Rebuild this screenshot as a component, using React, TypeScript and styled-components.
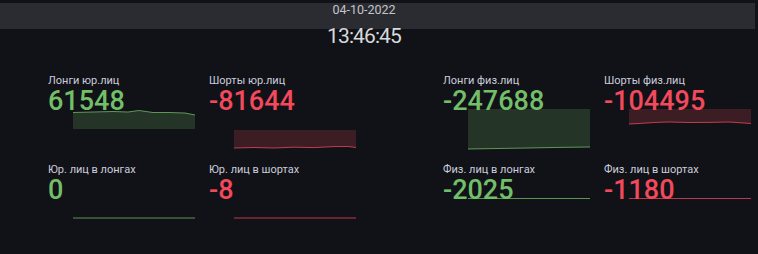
import React from "react";
import styled, { createGlobalStyle } from "styled-components";

const GlobalStyle = createGlobalStyle`
  html, body {
    margin: 0;
    padding: 0;
    background: #111217;
  }
  body {
    font-family: Roboto, "Liberation Sans", sans-serif;
  }
`;

const Page = styled.div`
  width: 758px;
  height: 254px;
  box-sizing: border-box;
  padding-top: 3px;
  background: #111217;
  overflow: hidden;
`;

const DateBar = styled.div`
  width: 755px;
  height: 26px;
  background: #2b2c31;
  box-sizing: border-box;
  padding-right: 27px;
  text-align: center;
  font-size: 12.5px;
  line-height: 14px;
  color: #c3c4c9;
`;

const Clock = styled.div`
  width: 728px;
  text-align: center;
  font-size: 21px;
  line-height: 15px;
  letter-spacing: -0.9px;
  color: #d8d9da;
`;

const Groups = styled.div`
  display: flex;
  gap: 73px;
  margin-top: 29px;
  padding-left: 48px;
`;

const Group = styled.div`
  display: grid;
  grid-template-columns: 161px 161px;
  grid-auto-rows: 89px;
`;

const Stat = styled.div`
  display: flex;
  flex-direction: column;
`;

const Label = styled.div`
  font-size: 11px;
  line-height: 15px;
  color: #ccccdc;
  white-space: nowrap;
`;

const Value = styled.div<{ $tone: "up" | "down" }>`
  position: relative;
  z-index: 1;
  font-size: 27px;
  line-height: 27px;
  font-weight: 500;
  color: ${(p) => (p.$tone === "up" ? "#73bf69" : "#f2495c")};
  white-space: nowrap;
`;

const SparkSvg = styled.svg`
  display: block;
  margin-top: -6px;
  margin-left: 25px;
  overflow: visible;
`;

const W = 122;
const H = 41;

type Pt = [number, number];

interface ISparkline {
  points: Pt[];
  fillTo?: number;
  color: string;
}

const Sparkline = ({ points, fillTo, color }: ISparkline): React.ReactElement => {
  const line = points.map(([x, y], i) => `${i ? "L" : "M"}${x} ${y}`).join(" ");
  const area = fillTo !== undefined ? `${line} L${W} ${fillTo} L0 ${fillTo} Z` : null;
  return (
    <SparkSvg width={W} height={H} viewBox={`0 0 ${W} ${H}`}>
      {area && <path d={area} fill={color} fillOpacity={0.2} />}
      <path d={line} fill="none" stroke={color} strokeWidth={1} strokeOpacity={0.75} />
    </SparkSvg>
  );
};

const GREEN = "#73bf69";
const RED = "#f2495c";

interface IStatData {
  label: string;
  value: string;
  tone: "up" | "down";
  points: Pt[];
  fillTo?: number;
}

const legal: IStatData[] = [
  {
    label: "Лонги юр.лиц",
    value: "61548",
    tone: "up",
    points: [[0, 3.5], [20, 3], [40, 2.5], [55, 3], [66, 1.5], [80, 3.5], [96, 3.5], [112, 4], [122, 6]],
    fillTo: 20,
  },
  {
    label: "Шорты юр.лиц",
    value: "-81644",
    tone: "down",
    points: [[0, 39], [20, 38.5], [40, 39], [60, 38.2], [80, 38.6], [100, 37.6], [114, 37.5], [122, 38.5]],
    fillTo: 21,
  },
  {
    label: "Юр. лиц в лонгах",
    value: "0",
    tone: "up",
    points: [[0, 20], [122, 20]],
  },
  {
    label: "Юр. лиц в шортах",
    value: "-8",
    tone: "down",
    points: [[0, 20], [122, 20]],
  },
];

const individuals: IStatData[] = [
  {
    label: "Лонги физ.лиц",
    value: "-247688",
    tone: "up",
    points: [[0, 40], [30, 39.5], [60, 39], [90, 38.4], [122, 38]],
    fillTo: 0,
  },
  {
    label: "Шорты физ.лиц",
    value: "-104495",
    tone: "down",
    points: [[0, 15], [10, 14.5], [25, 13.5], [40, 13], [60, 13.5], [80, 13.4], [100, 13], [122, 14.5]],
    fillTo: 0,
  },
  {
    label: "Физ. лиц в лонгах",
    value: "-2025",
    tone: "up",
    points: [[0, 0.5], [122, 0.5]],
  },
  {
    label: "Физ. лиц в шортах",
    value: "-1180",
    tone: "down",
    points: [[0, 0.5], [122, 0.5]],
  },
];

const StatPanel = ({ label, value, tone, points, fillTo }: IStatData): React.ReactElement => (
  <Stat>
    <Label>{label}</Label>
    <Value $tone={tone}>{value}</Value>
    <Sparkline points={points} fillTo={fillTo} color={tone === "up" ? GREEN : RED} />
  </Stat>
);

const App = (): React.ReactElement => {
  return (
    <>
      <GlobalStyle />
      <Page>
        <DateBar>04-10-2022</DateBar>
        <Clock>13:46:45</Clock>
        <Groups>
          <Group>
            {legal.map((s) => (
              <StatPanel key={s.label} {...s} />
            ))}
          </Group>
          <Group>
            {individuals.map((s) => (
              <StatPanel key={s.label} {...s} />
            ))}
          </Group>
        </Groups>
      </Page>
    </>
  );
};

export default App;
